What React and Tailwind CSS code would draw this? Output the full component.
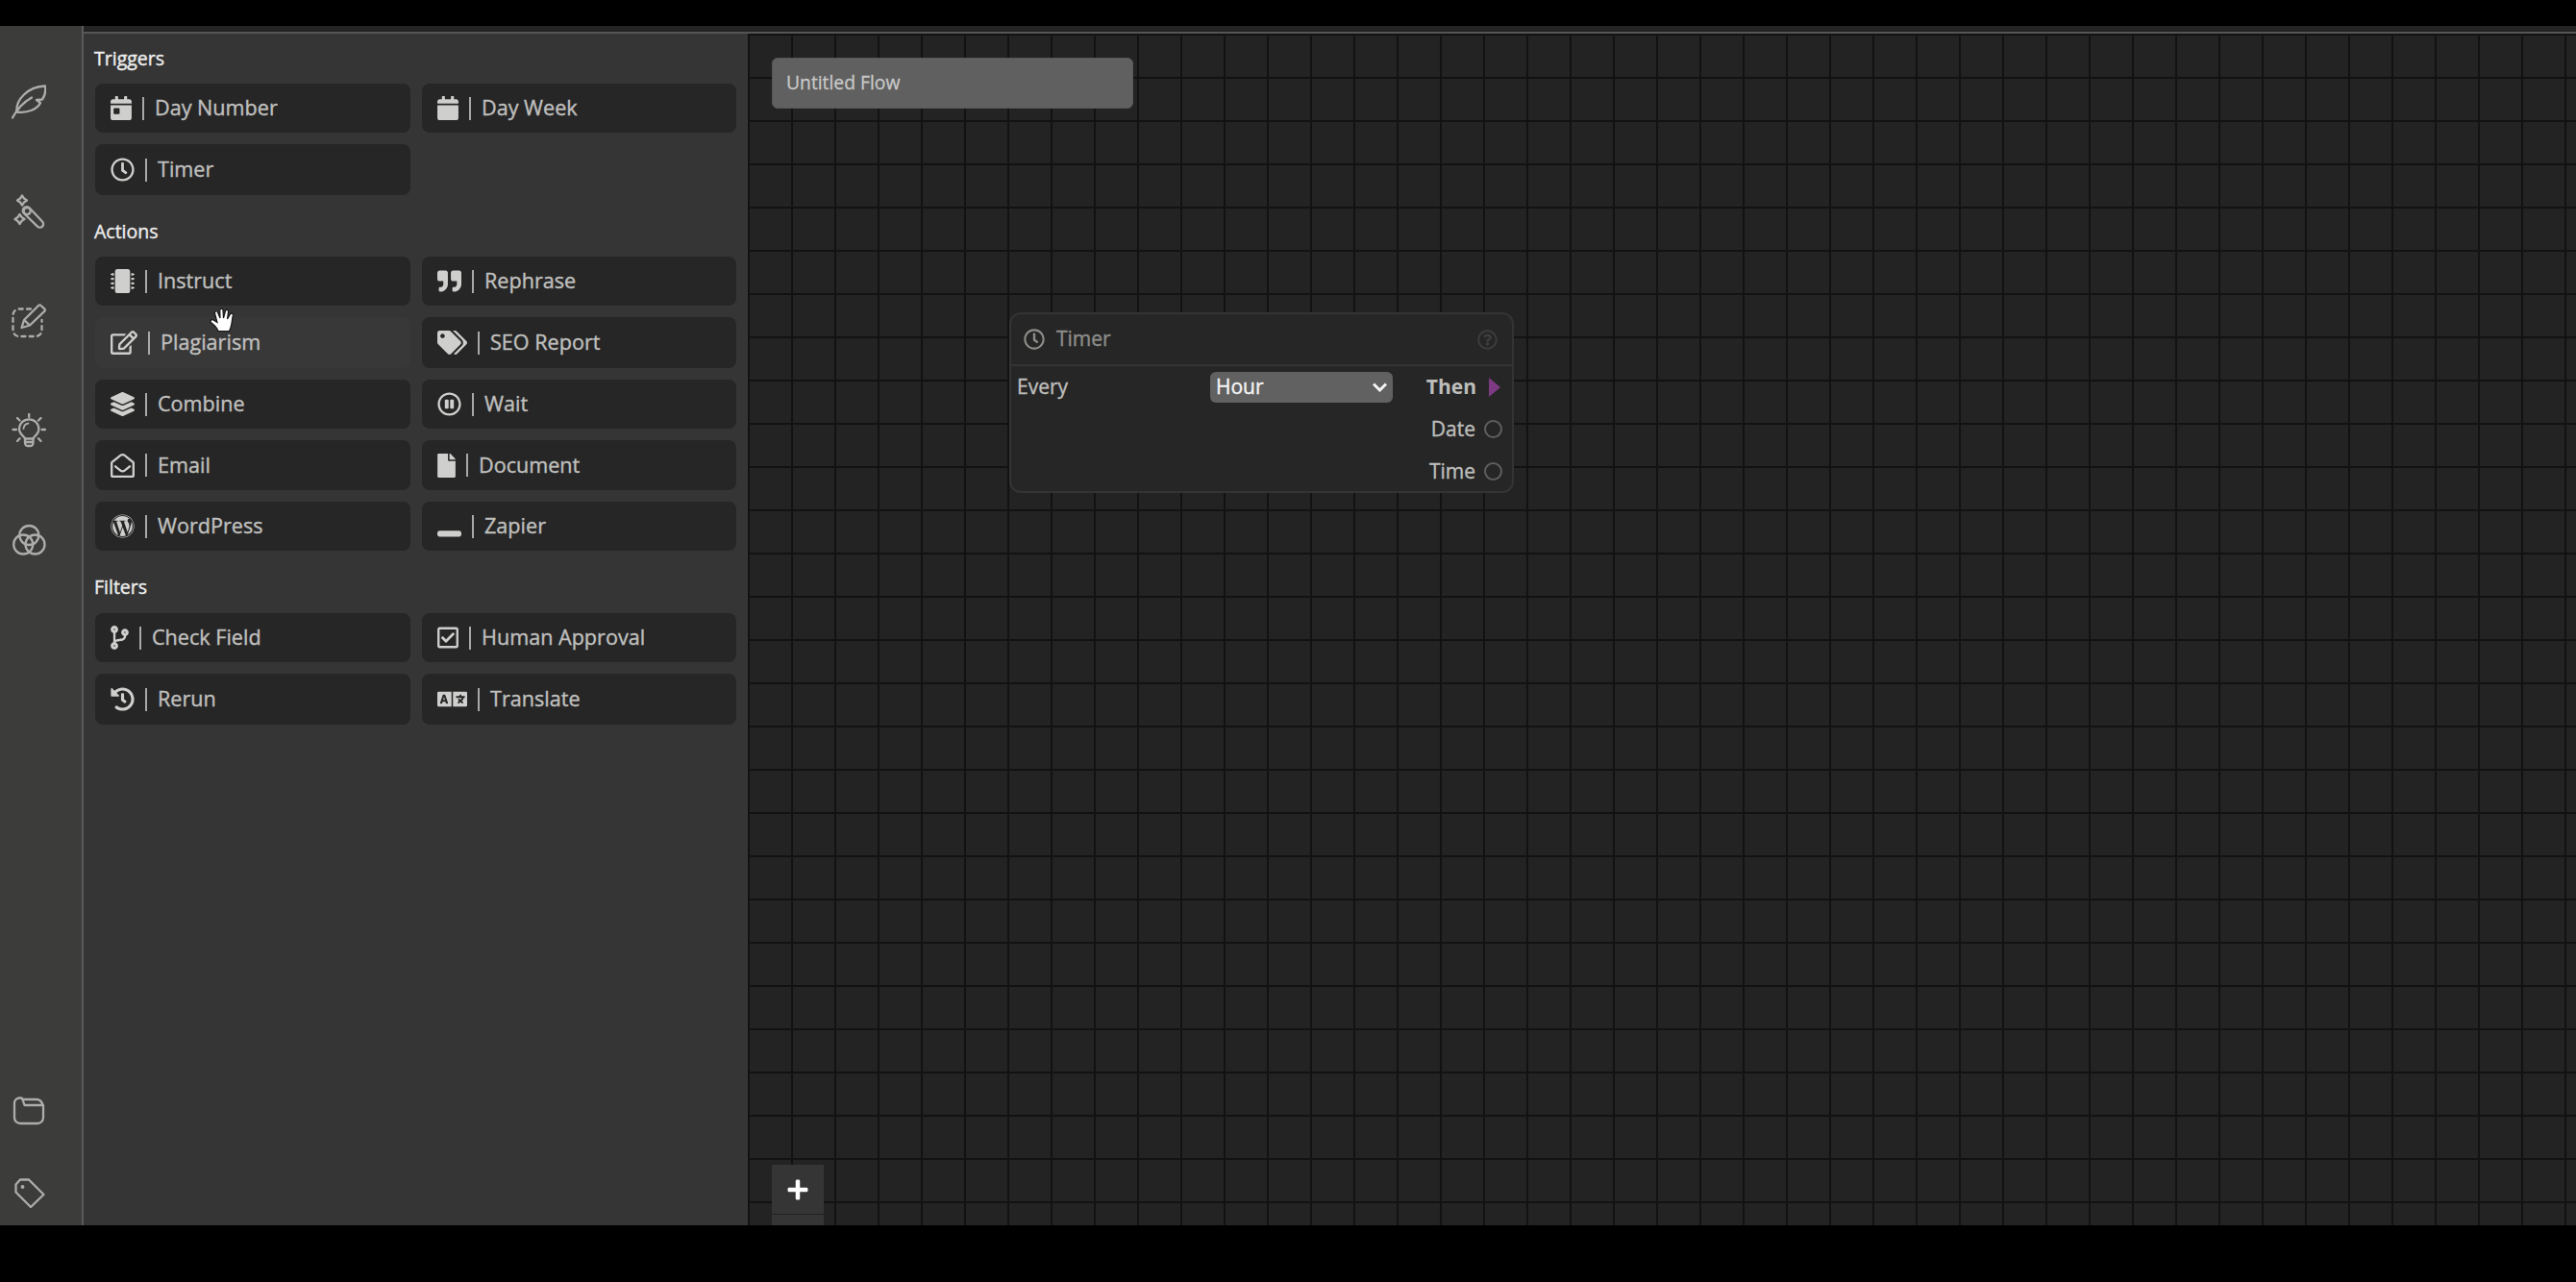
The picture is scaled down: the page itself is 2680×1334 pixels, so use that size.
import {
  FaCalendar,
  FaCalendarDay,
  FaCodeBranch,
  FaFile,
  FaHistory,
  FaLanguage,
  FaLayerGroup,
  FaMicrochip,
  FaPlus,
  FaQuoteRight,
  FaRegCheckSquare,
  FaRegClock,
  FaRegEdit,
  FaRegEnvelopeOpen,
  FaRegPauseCircle,
  FaRegQuestionCircle,
  FaTags,
  FaWindowMinimize,
  FaWordpress,
} from 'react-icons/fa';

const sections = [
  {
    title: 'Triggers',
    headClass: 'h-[52px] pt-[9px]',
    rowsClass: 'grid-rows-[51px_53px]',
    items: [
      { label: 'Day Number', icon: FaCalendarDay, iconClass: 'w-[22px]' },
      { label: 'Day Week', icon: FaCalendar, iconClass: 'w-[22px]' },
      { label: 'Timer', icon: FaRegClock, iconClass: 'w-[25px]' },
    ],
  },
  {
    title: 'Actions',
    headClass: 'h-[64px] pt-[21px]',
    rowsClass: 'grid-rows-[51px_53px_51px_52px_51px]',
    items: [
      { label: 'Instruct', icon: FaMicrochip, iconClass: 'w-[25px]' },
      { label: 'Rephrase', icon: FaQuoteRight, iconClass: 'w-[25px]' },
      { label: 'Plagiarism', icon: FaRegEdit, iconClass: 'w-[28px]', hovered: true },
      { label: 'SEO Report', icon: FaTags, iconClass: 'w-[31px]' },
      { label: 'Combine', icon: FaLayerGroup, iconClass: 'w-[25px]' },
      { label: 'Wait', icon: FaRegPauseCircle, iconClass: 'w-[25px]' },
      { label: 'Email', icon: FaRegEnvelopeOpen, iconClass: 'w-[25px]' },
      { label: 'Document', icon: FaFile, iconClass: 'w-[19px]' },
      { label: 'WordPress', icon: FaWordpress, iconClass: 'w-[25px]' },
      { label: 'Zapier', icon: FaWindowMinimize, iconClass: 'w-[25px]' },
    ],
  },
  {
    title: 'Filters',
    headClass: 'h-[65px] pt-[21px]',
    rowsClass: 'grid-rows-[51px_53px]',
    items: [
      { label: 'Check Field', icon: FaCodeBranch, iconClass: 'w-[19px]' },
      { label: 'Human Approval', icon: FaRegCheckSquare, iconClass: 'w-[22px]' },
      { label: 'Rerun', icon: FaHistory, iconClass: 'w-[25px]' },
      { label: 'Translate', icon: FaLanguage, iconClass: 'w-[31px]' },
    ],
  },
];

function RailIcon({ children }) {
  return (
    <svg
      viewBox="0 0 36 36"
      className="h-9 w-9 shrink-0 text-[#adadab]"
      fill="none"
      stroke="currentColor"
      strokeWidth="2.300"
      strokeLinecap="round"
      strokeLinejoin="round"
    >
      {children}
    </svg>
  );
}

function Rail() {
  return (
    <nav className="flex w-[87px] shrink-0 flex-col border-r-2 border-[#5a5a5a] bg-[#3c3c3a] pl-3">
      <div className="flex flex-col gap-[78px] pt-[61px]">
        {/* feather */}
        <RailIcon>
          <path d="M1 34.500 C6 25 13 18 21 13.500" />
          <path d="M5.500 28.500 C4 16 17 2 35 1.500 C36 8 34.500 12 32 15.500 L26 16 L30 19 C27 25.500 17 30 5.500 28.500 Z" />
        </RailIcon>
        {/* wand */}
        <RailIcon>
          <path d="M11 1.500 L13 4.500 L16 6.500 L13 8.500 L11 11.500 L9 8.500 L6 6.500 L9 4.500 Z" />
          <path d="M8.500 21 L10.500 24 L13.500 26 L10.500 28 L8.500 31 L6.500 28 L3.500 26 L6.500 24 Z" />
          <path d="M12.900 20 a4 4 0 0 1 5.700 -5.700 L32 28.500 a3.600 3.600 0 0 1 -5 5.200 Z" />
          <circle cx="16.200" cy="17.600" r="3.600" />
        </RailIcon>
        {/* edit area */}
        <RailIcon>
          <path
            d="M20 5.500 H8 a6.500 6.500 0 0 0 -6.500 6.500 V27.500 a6.500 6.500 0 0 0 6.500 6.500 H25 a6.500 6.500 0 0 0 6.500 -6.500 V17"
            strokeDasharray="4 4.300"
          />
          <path d="M10.500 25 L13 17 L28 2 a1.800 1.800 0 0 1 2.600 0 L34.300 5.300 a1.800 1.800 0 0 1 0 2.600 L19 22.500 Z" />
          <path d="M13.500 17.300 L18.500 22" />
        </RailIcon>
        {/* idea */}
        <RailIcon>
          <path d="M14 26.500 C14 24.500 8 22 8 16.500 a10.200 10.200 0 0 1 20.400 0 C28.400 22 22.500 24.500 22.500 26.500 Z" />
          <path d="M14 26.500 V31 a3 3 0 0 0 3 3 H19.500 a3 3 0 0 0 3 -3 V26.500 M14 30 H22.500" />
          <path d="M12.500 16 a6 6 0 0 1 5 -5.500" strokeWidth="1.800" />
          <path d="M18.200 0.800 V4 M1.500 17 H5 M31.500 17 H35 M6 5 L8.500 7.500 M30.500 5 L28 7.500 M6 29 L8.500 26.300 M30.500 29 L28 26.300" />
        </RailIcon>
        {/* blend */}
        <RailIcon>
          <circle cx="18.300" cy="13" r="10" />
          <circle cx="12.200" cy="22.500" r="10" />
          <circle cx="24.500" cy="22.500" r="10" />
        </RailIcon>
      </div>
      <div className="mt-auto flex flex-col gap-[48px] pb-[16px]">
        {/* folder */}
        <RailIcon>
          <path d="M3 9 a5.500 5.500 0 0 1 5 -5.500 H9.500 a2 2 0 0 1 2 1.500 L13.500 11 H33 V24 a6 6 0 0 1 -6 6 H9 a6 6 0 0 1 -6 -6 Z" />
          <path d="M11.500 5 H26 C29.500 5 31.500 7 32.500 11" />
        </RailIcon>
        {/* tag */}
        <RailIcon>
          <path d="M9 4.500 H18 L33.500 20 L20 33 L4.500 17.500 V9.500 Z" />
          <circle cx="11.500" cy="12" r="0.800" fill="currentColor" />
        </RailIcon>
      </div>
    </nav>
  );
}

function BlockButton({ label, icon: Icon, iconClass, hovered }) {
  return (
    <button
      type="button"
      className={`flex items-center rounded-lg pl-[15.5px] text-[21.6px] text-[#bfbfbd] [-webkit-text-stroke:0.4px] ${hovered ? 'bg-[#383838]' : 'bg-[#262626]'}`}
    >
      <Icon className={`h-[25px] shrink-0 text-[#cfcfcd] ${iconClass}`} />
      <span className="ml-[11px] h-6 w-0.5 bg-[#a8a8a6]" />
      <span className="ml-[11.5px] whitespace-nowrap">{label}</span>
    </button>
  );
}

function Sidebar() {
  return (
    <aside className="w-[691px] shrink-0 bg-[#353535] pl-3 pr-3">
      {sections.map((section) => (
        <section key={section.title}>
          <h2
            className={`-ml-px text-[19.5px] leading-[34px] text-[#ededed] [-webkit-text-stroke:0.4px] ${section.headClass}`}
          >
            {section.title}
          </h2>
          <div className={`grid grid-cols-[328px_327px] gap-3 ${section.rowsClass}`}>
            {section.items.map((item) => (
              <BlockButton key={item.label} {...item} />
            ))}
          </div>
        </section>
      ))}
    </aside>
  );
}

function TimerNode() {
  return (
    <div className="absolute left-[272px] top-[290px] flex h-[188px] w-[525px] flex-col rounded-xl border-2 border-[#343434] bg-[#262626] text-[21px] text-[#bdbdbb] [-webkit-text-stroke:0.4px]">
      <div className="flex h-[54px] shrink-0 items-center border-b-2 border-[#343434] pl-[13px] pr-[15px] text-[#8d8d89]">
        <FaRegClock className="h-[22px] w-[22px]" />
        <span className="ml-3">Timer</span>
        <FaRegQuestionCircle className="ml-auto h-[21px] w-[21px] text-[#3d3d3d]" />
      </div>
      <div className="flex flex-1">
        <div className="flex h-11 flex-1 items-center justify-between pl-1.5">
          <span>Every</span>
          <div className="flex h-8 w-[190px] items-center justify-between rounded-md bg-[#616161] pl-1.5 pr-1.5 text-[#f4f4f4]">
            <span>Hour</span>
            <svg viewBox="0 0 15 10" className="h-2.5 w-[15px]" fill="none" stroke="currentColor" strokeWidth="3">
              <path d="M1 1.500 L7.500 8 L14 1.500" />
            </svg>
          </div>
        </div>
        <div className="flex w-[124px] flex-col pr-2.5">
          <div className="flex h-11 items-center justify-end">
            <span className="font-bold [-webkit-text-stroke:0px]">Then</span>
            <svg viewBox="0 0 12 20" className="ml-[13px] mr-0.5 h-5 w-3">
              <path d="M0 0 L12 10 L0 20 Z" fill="#7f3a84" />
            </svg>
          </div>
          {['Date', 'Time'].map((name) => (
            <div key={name} className="flex h-[43.5px] items-center justify-end">
              <span>{name}</span>
              <span className="ml-[9px] h-[19px] w-[19px] rounded-full border-2 border-[#5e5e5e]" />
            </div>
          ))}
        </div>
      </div>
    </div>
  );
}

function Canvas() {
  return (
    <main className="relative flex flex-1 flex-col justify-between overflow-hidden bg-[#232323] bg-[linear-gradient(to_right,#121212_2px,transparent_2px),linear-gradient(to_bottom,#121212_2px,transparent_2px)] bg-[size:45px_45px] pl-[25px] pt-[25px]">
      <input
        type="text"
        defaultValue="Untitled Flow"
        className="h-[53px] w-[376px] rounded-md border border-[#575757] bg-[#606060] pb-0.5 pl-3.5 text-[19.3px] text-[#c8c8c8] outline-none [-webkit-text-stroke:0.3px]"
      />
      <div className="flex w-[54px] flex-col bg-[#353535]">
        <button type="button" className="flex h-[52px] items-center justify-center border-b border-[#222222] text-white">
          <FaPlus className="h-6 w-6" />
        </button>
        <div className="h-[11px]" />
      </div>
      <TimerNode />
    </main>
  );
}

function GrabCursor() {
  return (
    <svg viewBox="0 0 26 26" className="pointer-events-none absolute left-[218px] top-[320px] h-[26px] w-[26px]">
      <path
        d="M9 24.500 C8 21 4 17.500 1.500 15.500 C0 14 2 12 4 13 L8 15.500 L5.500 6 C5 3.500 7.800 3 8.500 5 L11 11 L10.800 3 C10.800 0.500 13.800 0.500 14 3 L14.500 11 L16.500 3.500 C17.200 1.500 19.800 2.200 19.500 4.500 L18.500 12 L21.500 7 C22.700 5.200 25 6.500 24.300 8.500 C23 14 23.500 19 20.500 24.500 Z"
        fill="#ffffff"
        stroke="#161616"
        strokeWidth="1.200"
      />
    </svg>
  );
}

export default function App() {
  return (
    <div className="relative flex h-[1334px] w-[2680px] overflow-hidden bg-black pb-[59px] pt-[27px] font-['Open_Sans',sans-serif]">
      <Rail />
      <div className="flex flex-1 flex-col">
        <div className="h-2 shrink-0 border-b-2 border-[#555555] bg-[#232323]" />
        <div className="flex min-h-0 flex-1">
          <Sidebar />
          <Canvas />
        </div>
      </div>
      <GrabCursor />
    </div>
  );
}
